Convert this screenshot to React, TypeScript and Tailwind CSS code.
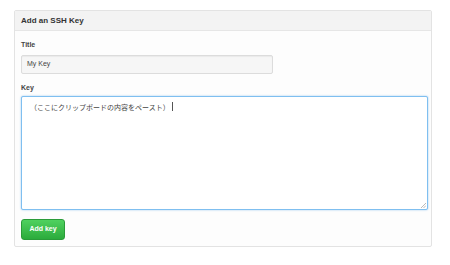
export default function App() {
  return (
    <div
      className="h-[265px] w-[450px] bg-white pl-[14px] pt-[10px]"
      style={{ fontFamily: '"Liberation Sans", "Noto Sans CJK JP", sans-serif' }}
    >
      <div className="flex h-[237px] w-[418px] flex-col rounded-[2px] border border-[#e3e3e3] bg-[#fdfdfd]">
        <div className="flex h-[20px] items-center border-b border-[#e6e6e6] bg-[#f3f3f3] px-[6px] text-[8px] font-bold text-[#333]">
          Add an SSH Key
        </div>
        <div className="flex flex-col px-[6px] pt-[9px]">
          <label className="h-[10px] text-[7px] leading-[10px] font-bold text-[#444]">Title</label>
          <div className="mt-[5px] flex h-[19px] w-[252px] items-center rounded-[2px] border border-[#dcdcdc] bg-[#f6f6f6] px-[5px] text-[7px] text-[#444] shadow-[inset_0_1px_1px_rgba(0,0,0,0.05)]">
            My Key
          </div>
          <label className="mt-[9px] h-[10px] text-[7px] leading-[10px] font-bold text-[#444]">Key</label>
          <div className="relative mt-[3px] h-[114px] w-[407px] rounded-[2px] border border-[#7fbff0] bg-white px-[8px] pt-[4px] text-[7px] text-[#444] shadow-[0_0_2px_rgba(80,160,230,0.6)]">
            <span>（ここにクリップボードの内容をペースト）</span>
            <span className="ml-[2px] inline-block h-[9px] w-px translate-y-[1px] bg-[#555]" />
            <svg className="absolute bottom-[1px] right-[1px]" width="5" height="5" viewBox="0 0 5 5">
              <path d="M5 0L0 5M5 2.5L2.5 5" stroke="#aaa" strokeWidth="0.8" />
            </svg>
          </div>
          <button className="mt-[9px] flex h-[21px] w-[44px] items-center justify-center rounded-[3px] border border-[#2a9b39] bg-gradient-to-b from-[#4fd15f] to-[#2bab3c] text-[7px] font-bold text-white">
            Add key
          </button>
        </div>
      </div>
    </div>
  );
}
